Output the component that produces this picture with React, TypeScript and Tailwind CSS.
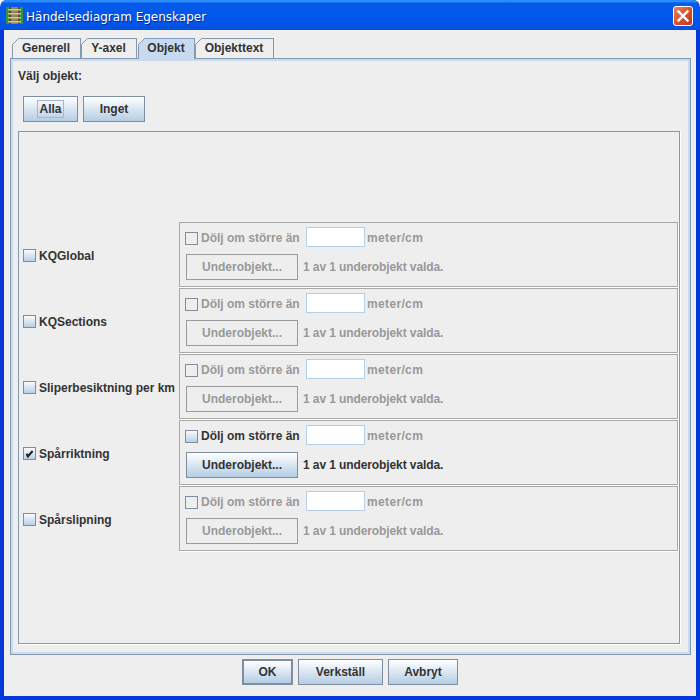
import React from "react";

function Tab({ label, w, selected }: { label: string; w: string; selected?: boolean }) {
  return (
    <div
      className={`relative h-[21px] flex items-center justify-center border-t border-l border-r border-[#8599ad] pr-[1px] pb-[2px] ${w} ${
        selected ? "bg-[#c8daf0] z-10 border-b-0 border-t-[#7f9dc6]" : "bg-[#eeeeee]"
      }`}
    >
      <span>{label}</span>
      <svg className="absolute -left-px -top-px" width="7" height="7" viewBox="0 0 7 7">
        <polygon points="0,0 7,0 0,7" fill="#eeeeee" />
        <line x1="0.5" y1="6.5" x2="6.5" y2="0.5" stroke="#8599ad" strokeWidth="1" />
      </svg>
    </div>
  );
}

function Btn({
  label,
  w,
  disabled,
  focus,
  dflt,
}: {
  label: string;
  w: string;
  disabled?: boolean;
  focus?: boolean;
  dflt?: boolean;
}) {
  return (
    <div
      className={`h-[26px] flex items-center justify-center shrink-0 ${w} ${
        disabled
          ? "border border-[#9a9a9a] bg-[#eeeeee] text-[#999999]"
          : `${dflt ? "border-2" : "border"} border-[#7d8ea3] bg-gradient-to-b from-[#ffffff] to-[#b5cde4] text-[#333333]`
      }`}
    >
      {focus ? <span className="border border-[#a3b8cc] leading-[16px] px-[1px]">{label}</span> : label}
    </div>
  );
}

function Check({ disabled, checked }: { disabled?: boolean; checked?: boolean }) {
  return (
    <div
      className={`w-[13px] h-[13px] shrink-0 border border-[#7d8ea3] relative ${
        disabled ? "bg-[#eeeeee]" : "bg-gradient-to-b from-[#f8fbfd] to-[#b9cfe6]"
      }`}
    >
      {checked && (
        <svg className="absolute left-0 top-0" width="11" height="11" viewBox="0 0 11 11">
          <path d="M2.6 5.8 L3.9 8.4 L8.6 3" fill="none" stroke="#1f1f1f" strokeWidth="2" />
        </svg>
      )}
    </div>
  );
}

function Row({ name, enabled, checked }: { name: string; enabled?: boolean; checked?: boolean }) {
  const disabled = !enabled;
  const tc = disabled ? "text-[#999999]" : "text-[#333333]";
  return (
    <div className="flex items-center h-[65px]">
      <div className="w-[160px] pl-[4px] mt-[2px] flex items-center gap-[3px] shrink-0 whitespace-nowrap">
        <Check checked={checked} />
        <span>{name}</span>
      </div>
      <div className="w-[499px] h-[65px] border border-[#a8a8a8] shadow-[1px_1px_0_#ffffff] pt-[4px] pl-[5px] flex flex-col gap-[7px]">
        <div className={`flex items-center h-[20px] ${tc}`}>
          <div className="mt-[2px] flex items-center">
            <Check disabled={disabled} />
            <span className="ml-[3px] w-[105px]">Dölj om större än</span>
          </div>
          <div className="w-[59px] h-[20px] bg-white border border-[#b3d0ea] shrink-0" />
          <span className="ml-[2px] mt-[2px] text-[#999999] tracking-[0.35px]">meter/cm</span>
        </div>
        <div className={`flex items-center pl-[1px] ${tc}`}>
          <Btn label="Underobjekt..." w="w-[112px]" disabled={disabled} />
          <span className="ml-[5px] tracking-[-0.1px]">1 av 1 underobjekt valda.</span>
        </div>
      </div>
    </div>
  );
}

export default function App() {
  return (
    <div
      className="w-[700px] h-[700px] flex flex-col rounded-t-[7px] bg-white overflow-hidden text-[12px] font-bold text-[#333333]"
      style={{ fontFamily: '"Liberation Sans", Arial, sans-serif' }}
    >
      <div className="h-[30px] shrink-0 bg-gradient-to-b from-[#0a5ae6] via-[#0058ee] to-[#0350e0] shadow-[inset_0_2px_0_#2a8cfa,inset_0_3px_0_#1570f0] flex items-center pl-[6px] pr-[7px] pt-[1px]">
        <svg width="17" height="17" viewBox="0 0 17 17" className="shrink-0">
          <rect width="17" height="17" fill="#3f8f3c" />
          <rect x="3" y="0" width="11" height="17" fill="#8f8558" />
          <rect x="3" y="0" width="2" height="17" fill="#5e4c28" />
          <rect x="12" y="0" width="2" height="17" fill="#5e4c28" />
          {[2, 6, 10, 14].map((y) => (
            <rect key={y} x="2" y={y} width="13" height="1.5" fill="#cfc592" />
          ))}
        </svg>
        <span
          className="ml-[3px] mt-[2px] text-white font-normal text-[12px] [text-shadow:1px_1px_0_#0a2a90]"
          style={{ fontFamily: '"DejaVu Sans", sans-serif' }}
        >
          Händelsediagram Egenskaper
        </span>
        <div className="ml-auto w-[20px] h-[20px] rounded-[3px] border border-white bg-gradient-to-br from-[#e9815f] via-[#d9522c] to-[#c03a1a] flex items-center justify-center">
          <svg width="14" height="14" viewBox="0 0 14 14">
            <path d="M2.5 2.5 L11.5 11.5 M11.5 2.5 L2.5 11.5" stroke="#ffffff" strokeWidth="2.4" strokeLinecap="square" />
          </svg>
        </div>
      </div>

      <div className="flex-1 border-l-4 border-r-4 border-b-4 border-[#0438d8] bg-[#eeeeee] px-[6px] pt-[8px] flex flex-col min-h-0">
        <div className="flex pl-[2px] h-[20px] shrink-0 items-start">
          <Tab label="Generell" w="w-[69px]" />
          <Tab label="Y-axel" w="w-[56px]" />
          <div className="w-[1px]" />
          <Tab label="Objekt" w="w-[57px]" selected />
          <Tab label="Objekttext" w="w-[79px]" />
        </div>
        <div className="h-[597px] w-[681px] shrink-0 border border-[#8599ad] relative">
          <div className="h-full border-[2px] border-[#c8daf0] px-[5px] flex flex-col">
            <div className="h-[35px] pt-[6px] shrink-0">Välj objekt:</div>
            <div className="flex gap-[5px] pl-[5px] shrink-0">
              <Btn label="Alla" w="w-[55px]" focus />
              <Btn label="Inget" w="w-[62px]" />
            </div>
            <div className="mt-[9px] w-[662px] h-[513px] shrink-0 border border-[#8599ad] shadow-[1px_1px_0_#ffffff] pb-[2px] flex flex-col justify-center gap-[1px]">
              <Row name="KQGlobal" />
              <Row name="KQSections" />
              <Row name="Sliperbesiktning per km" />
              <Row name="Spårriktning" enabled checked />
              <Row name="Spårslipning" />
            </div>
          </div>
        </div>
        <div className="flex justify-center gap-[5px] pt-[4px]">
          <Btn label="OK" w="w-[51px]" dflt />
          <Btn label="Verkställ" w="w-[85px]" />
          <Btn label="Avbryt" w="w-[70px]" />
        </div>
      </div>
    </div>
  );
}
